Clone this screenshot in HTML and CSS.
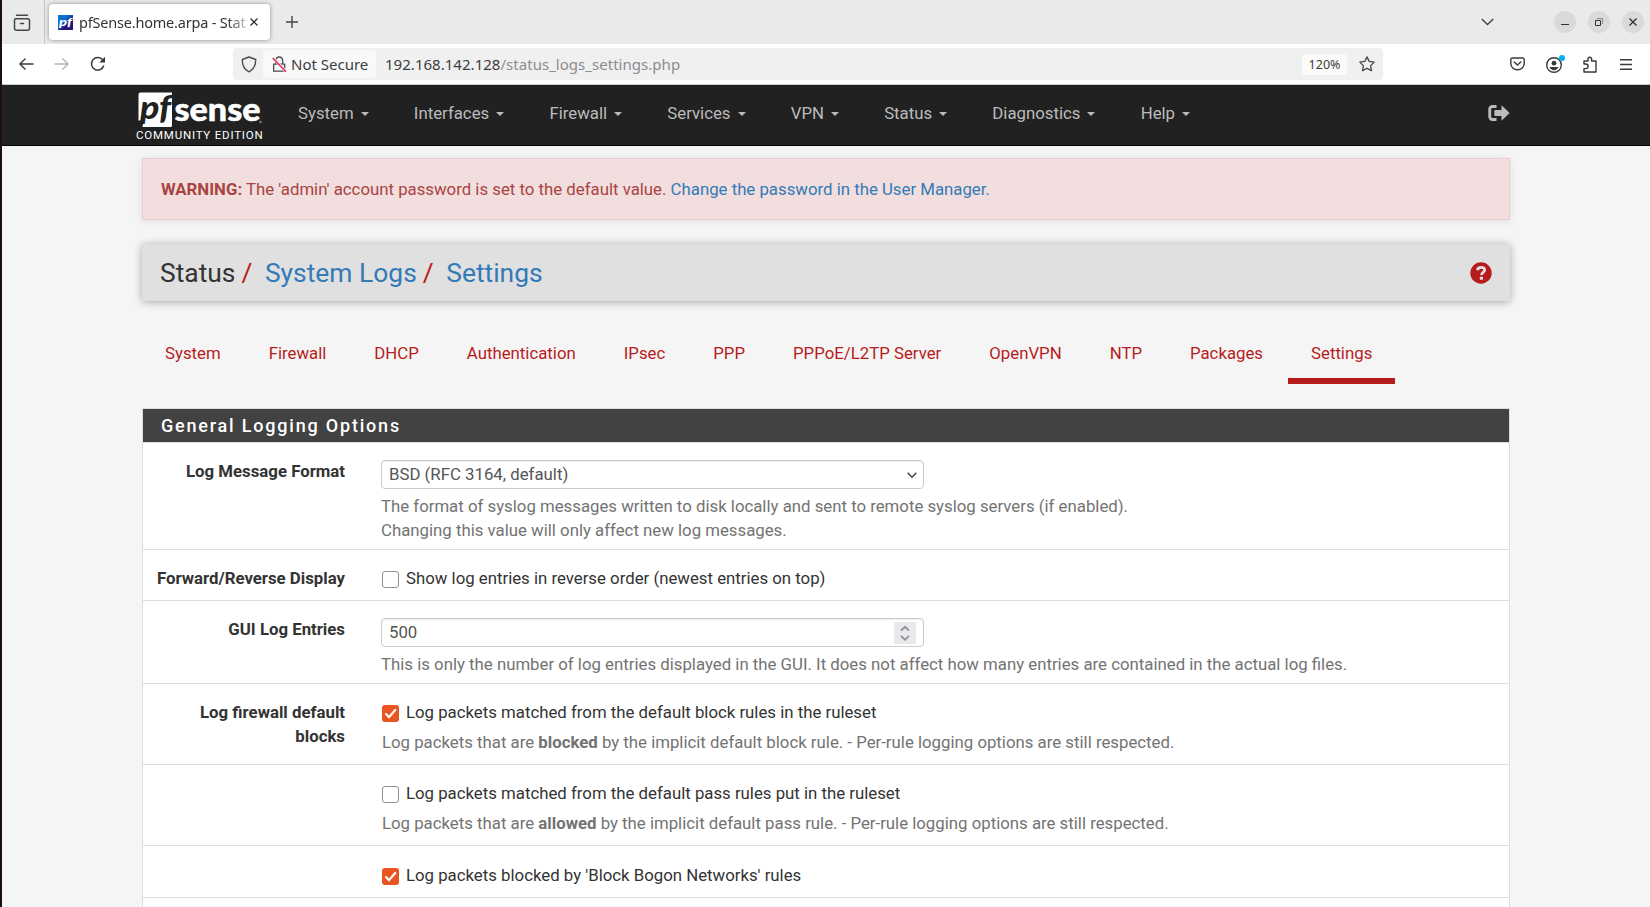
FILE: index.html
```html
<!DOCTYPE html>
<html lang="en">
<head>
<meta charset="utf-8">
<title>pfSense.home.arpa - Status: System Logs: Settings</title>
<link rel="stylesheet" href="styles.css">
</head>
<body>
<div class="window">
  <div class="tabstrip">
    <div class="firefox-view">
      <svg width="18" height="18" viewBox="0 0 18 18" fill="none" stroke="#45454a" stroke-width="1.5" stroke-linecap="round"><path d="M3.5 1.2h11M2.5 4.7h12.200a1.800 1.800 0 0 1 1.800 1.800v7.700a2 2 0 0 1-2 2h-11a2 2 0 0 1-2-2V6.500a1.800 1.800 0 0 1 1-1.800M7.500 9.500h3"/></svg>
    </div>
    <div class="tab">
      <svg class="favicon" width="15" height="15" viewBox="0 0 15 15"><defs><linearGradient id="fav" x1="0" y1="0" x2="1" y2="1"><stop offset=".35" stop-color="#0d6fd0"/><stop offset=".65" stop-color="#22157a"/></linearGradient></defs><rect width="15" height="15" fill="url(#fav)"/><text x="1" y="11" textLength="13" lengthAdjust="spacingAndGlyphs" class="fav-text">pf</text></svg>
      <span class="tab-title">pfSense.home.arpa - Stat</span>
      <svg class="tab-close" width="8" height="8" viewBox="0 0 8 8" stroke="#333" stroke-width="1.300"><path d="M.5.5l7 7M7.500.5l-7 7"/></svg>
    </div>
    <svg class="new-tab" width="12" height="12" viewBox="0 0 12 12" stroke="#444" stroke-width="1.400"><path d="M6 0v12M0 6h12"/></svg>
    <svg class="all-tabs" width="13" height="8" viewBox="0 0 13 8" fill="none" stroke="#444" stroke-width="1.400"><path d="M.8 1l5.700 5.500L12.200 1"/></svg>
    <div class="win-buttons">
      <span class="win-btn"><svg width="22" height="22" stroke="#333" fill="none"><path d="M7 13.500h8"/></svg></span>
      <span class="win-btn"><svg width="22" height="22" stroke="#333" fill="none"><path d="M7.500 9.500h5v5h-5z"/><path stroke="#888" d="M9 7.500h5.500V13"/></svg></span>
      <span class="win-btn"><svg width="22" height="22" stroke="#333" stroke-width="1.400" fill="none"><path d="M7.500 7.500l7 7M14.500 7.500l-7 7"/></svg></span>
    </div>
  </div>
  <div class="toolbar">
    <svg class="back" width="15" height="12" viewBox="0 0 15 12" fill="none" stroke="#3a3a3e" stroke-width="1.400"><path d="M14.500 6H1M6.500.6L1 6l5.500 5.400"/></svg>
    <svg class="forward" width="15" height="12" viewBox="0 0 15 12" fill="none" stroke="#b3b3b5" stroke-width="1.400"><path d="M.5 6H14M8.500.6L14 6l-5.500 5.400"/></svg>
    <svg class="reload" width="16" height="16" viewBox="0 0 16 16" fill="none" stroke="#3a3a3e" stroke-width="1.500"><path d="M13.800 9.500A6.300 6.300 0 1 1 12.800 4"/><path fill="#3a3a3e" stroke="none" d="M15 .8v5.700H9.300z"/></svg>
    <div class="urlbar">
      <svg class="shield" width="16" height="17" viewBox="0 0 16 17" fill="none" stroke="#4a4a4f" stroke-width="1.400"><path d="M8 1l6.700 2.500c.1 5.300-1.200 9.500-6.700 12.300C2.500 13 1.200 8.800 1.300 3.500z" stroke-linejoin="round"/></svg>
      <div class="identity">
        <svg width="15" height="17" viewBox="0 0 15 17" fill="none" stroke="#4a4a4f" stroke-width="1.300"><path d="M1.700 8.200h11v7h-11zM3.700 8V4.500a3.500 3.500 0 0 1 7 0V8"/><path stroke="#f1f1f1" stroke-width="3" d="M1 2l13 13.500"/><path stroke="#e22850" stroke-width="1.500" d="M.8 2l13.200 13.700"/></svg>
        <span class="identity-label">Not Secure</span>
      </div>
      <span class="url"><span class="host">192.168.142.128</span><span class="path">/status_logs_settings.php</span></span>
      <span class="zoom"><span>120%</span></span>
      <svg class="star" width="16" height="16" viewBox="0 0 16 16" fill="none" stroke="#4a4a4f" stroke-width="1.300" stroke-linejoin="round"><path d="M8 .9l2.200 4.500 5 .7-3.600 3.500.9 5L8 12.300l-4.500 2.300.9-5L.8 6.100l5-.7z"/></svg>
    </div>
    <div class="tools">
      <svg width="15" height="14" viewBox="0 0 15 14" fill="none" stroke="#3a3a3e" stroke-width="1.400" stroke-linecap="round" stroke-linejoin="round"><path d="M2.300 1h10.400a1.500 1.500 0 0 1 1.500 1.500V6.500a6.700 6.300 0 0 1-13.400 0V2.500A1.500 1.500 0 0 1 2.300 1zM4.200 5l3.300 3 3.300-3"/></svg>
      <svg class="account" width="20" height="20" viewBox="0 0 20 20" fill="none"><circle cx="9" cy="11" r="7.300" stroke="#3a3a3e" stroke-width="1.400"/><circle cx="9" cy="9.200" r="2.400" fill="#3a3a3e"/><path fill="#3a3a3e" d="M4.500 13h9c-.6 2-2.400 3.200-4.500 3.200S5.100 15 4.500 13z"/><circle cx="17" cy="4" r="3" fill="#00b3f4"/></svg>
      <svg class="puzzle" width="14" height="17" viewBox="0 0 14 17" fill="none" stroke="#3a3a3e" stroke-width="1.400" stroke-linejoin="round"><path d="M1 8V5h4V3a1.800 1.800 0 0 1 3.600 0v2H13v11H1v-3.400h1.800a2.200 2.200 0 0 0 0-4.600z"/></svg>
      <svg class="burger" width="12" height="11" viewBox="0 0 12 11" stroke="#3a3a3e" stroke-width="1.400"><path d="M0 .7h12M0 5.500h12M0 10.300h12"/></svg>
    </div>
  </div>

  <nav class="navbar">
    <div class="brand">
      <svg class="logo" width="128" height="36" viewBox="0 0 128 36"><path fill="#fff" d="M4.500.5h31.500v33a1.500 1.500 0 0 1-1.500 1.500H6.500l1.200-6.500H2.500v-26a2 2 0 0 1 2-2z"/><text class="logo-pf" x="4" y="26.500" textLength="31" lengthAdjust="spacingAndGlyphs">pf</text><text class="logo-sense" x="38.500" y="28.500" textLength="86" lengthAdjust="spacingAndGlyphs">sense</text><circle cx="124.500" cy="30" r="1.300" fill="#777"/></svg>
      <span class="edition">COMMUNITY EDITION</span>
    </div>
    <ul class="menu">
      <li>System<i class="caret"></i></li>
      <li>Interfaces<i class="caret"></i></li>
      <li>Firewall<i class="caret"></i></li>
      <li>Services<i class="caret"></i></li>
      <li>VPN<i class="caret"></i></li>
      <li>Status<i class="caret"></i></li>
      <li>Diagnostics<i class="caret"></i></li>
      <li>Help<i class="caret"></i></li>
    </ul>
    <svg class="logout" width="22" height="16" viewBox="0 0 22 16" fill="#bbb"><path d="M8.500 0v3H4.500A1.300 1.300 0 0 0 3.200 4.300v7.400A1.300 1.300 0 0 0 4.500 13h4v3h-4A4.200 4.200 0 0 1 .3 11.800V4.200A4.200 4.200 0 0 1 4.500 0z"/><path d="M13.500.3L21.700 8l-8.200 7.700V11H7.300a1 1 0 0 1-1-1V6a1 1 0 0 1 1-1h6.200z"/></svg>
  </nav>

  <main class="container">
    <div class="alert"><b>WARNING:</b> The 'admin' account password is set to the default value. <a>Change the password in the User Manager.</a></div>
    <header class="crumbs">
      <ol><li>Status</li><li><a>System Logs</a></li><li><a>Settings</a></li></ol>
      <svg width="22" height="22" viewBox="0 0 22 22"><circle cx="11" cy="11" r="10.700" fill="#b71c1c"/><path d="M7.400 8.300C7.700 6.200 9 5.300 11 5.300c2.200 0 3.700 1.100 3.700 2.800 0 2.300-3.200 2.300-3.200 4.900" fill="none" stroke="#e0e0e0" stroke-width="2.700"/><rect x="9.800" y="14.700" width="3.200" height="3" rx=".4" fill="#e0e0e0"/></svg>
    </header>
    <ul class="tabs">
      <li>System</li><li>Firewall</li><li>DHCP</li><li>Authentication</li><li>IPsec</li><li>PPP</li><li>PPPoE/L2TP Server</li><li>OpenVPN</li><li>NTP</li><li>Packages</li><li class="active">Settings</li>
    </ul>
    <section class="panel">
      <h2>General Logging Options</h2>
      <div class="row">
        <label class="name">Log Message Format</label>
        <div class="field">
          <div class="control"><span class="value">BSD (RFC 3164, default)</span><svg class="chevron" width="10" height="7" viewBox="0 0 10 7" fill="none" stroke="#444" stroke-width="1.500"><path d="M.7.8L5 5.200 9.300.8"/></svg></div>
          <p class="help">The format of syslog messages written to disk locally and sent to remote syslog servers (if enabled).<br>Changing this value will only affect new log messages.</p>
        </div>
      </div>
      <div class="row check-row">
        <label class="name">Forward/Reverse Display</label>
        <div class="field"><div class="check"><i class="box"></i><span>Show log entries in reverse order (newest entries on top)</span></div></div>
      </div>
      <div class="row">
        <label class="name">GUI Log Entries</label>
        <div class="field">
          <div class="control"><span class="value">500</span><span class="spinner"><svg width="22" height="22" fill="none" stroke="#8f8f9d" stroke-width="1.800"><path d="M7 8.700l4-3.900 4 3.900M7 13.900l4 3.900 4-3.900"/></svg></span></div>
          <p class="help">This is only the number of log entries displayed in the GUI. It does not affect how many entries are contained in the actual log files.</p>
        </div>
      </div>
      <div class="row check-help">
        <label class="name">Log firewall default blocks</label>
        <div class="field"><div class="check"><i class="box on"><svg width="17" height="17" fill="none" stroke="#fff" stroke-width="2.200" stroke-linecap="round"><path d="M4 9l3 3.200L13.200 5"/></svg></i><span>Log packets matched from the default block rules in the ruleset</span></div>
        <p class="help">Log packets that are <b>blocked</b> by the implicit default block rule. - Per-rule logging options are still respected.</p></div>
      </div>
      <div class="row check-help">
        <label class="name"></label>
        <div class="field"><div class="check"><i class="box"></i><span>Log packets matched from the default pass rules put in the ruleset</span></div>
        <p class="help">Log packets that are <b>allowed</b> by the implicit default pass rule. - Per-rule logging options are still respected.</p></div>
      </div>
      <div class="row check-row last">
        <label class="name"></label>
        <div class="field"><div class="check"><i class="box on"><svg width="17" height="17" fill="none" stroke="#fff" stroke-width="2.200" stroke-linecap="round"><path d="M4 9l3 3.200L13.200 5"/></svg></i><span>Log packets blocked by 'Block Bogon Networks' rules</span></div></div>
      </div>
      <div class="row"></div>
    </section>
  </main>
</div>
</body>
</html>
```
FILE: styles.css
```css
* { box-sizing: border-box; }
html, body { margin: 0; height: 907px; overflow: hidden; }
body { background: #1d0d18; font-family: Roboto, "Liberation Sans", sans-serif; font-size: 16.8px; line-height: 24px; color: #333; }
svg { display: block; flex: none; }
a { color: #337ab7; }
ul, ol { list-style: none; margin: 0; padding: 0; }
.window { margin-left: 2px; height: 907px; background: #f5f5f5; overflow: hidden; }

.tabstrip { height: 44px; background: #eaeaea; display: flex; align-items: center; font-family: "Noto Sans", sans-serif; }
.firefox-view { width: 43px; height: 44px; border-right: 1px solid #c4c4c4; padding: 14px 0 0 11px; }
.tab { width: 221px; height: 36px; margin-left: 4px; background: #fff; border-radius: 4px; box-shadow: 0 0 4px rgba(0,0,0,.4); display: flex; align-items: center; padding: 0 12px 0 9px; }
.favicon { overflow: visible; }
.fav-text { font: italic 900 12px Lato, sans-serif; fill: #fff; }
.tab-title { margin-left: 6px; width: 169px; font-size: 14.5px; letter-spacing: -.2px; color: #333; white-space: nowrap; -webkit-mask-image: linear-gradient(90deg, #000 148px, transparent 175px); mask-image: linear-gradient(90deg, #000 148px, transparent 175px); }
.tab-close { margin-left: 2px; }
.new-tab { margin-left: 16px; }
.all-tabs { margin-left: auto; }
.win-buttons { display: flex; gap: 12px; margin: 0 6px 0 60px; }
.win-btn { width: 22px; height: 22px; border-radius: 50%; background: #dadada; }

.toolbar { height: 41px; background: #fff; border-bottom: 1px solid #ccc; display: flex; align-items: center; font-family: "Noto Sans", sans-serif; color: #3d3d40; }
.back { margin-left: 17px; }
.forward { margin-left: 20px; }
.reload { margin-left: 21px; }
.urlbar { margin-left: 127px; width: 1150px; height: 32px; background: #f0f0f0; border-radius: 4px; display: flex; align-items: center; font-size: 15px; }
.shield { margin-left: 8px; }
.identity { margin-left: 6px; width: 113px; height: 28px; padding-left: 9px; background: #f9f9f9; border-radius: 4px; display: flex; align-items: center; white-space: nowrap; }
.identity-label { margin-left: 4px; }
.url { margin-left: 9px; white-space: nowrap; letter-spacing: .03px; }
.path { color: #8c8c8e; }
.zoom { margin-left: auto; width: 45px; height: 21px; background: #fbfbfb; border-radius: 4px; font-size: 12.5px; line-height: 21px; text-align: center; }
.star { margin: 0 8px 0 12px; }
.tools { margin-left: auto; margin-right: 18px; display: flex; align-items: center; }
.account { margin-left: 20px; }
.puzzle { margin-left: 18px; }
.burger { margin-left: 23px; }

.navbar { height: 61px; background: #212121; border-bottom: 1px solid #000; display: flex; color: #bbb; }
.brand { margin-left: 134px; width: 128px; padding-top: 7px; }
.logo { overflow: visible; }
.logo-pf { font: italic 900 33px Lato, sans-serif; fill: #212121; }
.logo-sense { font: 900 32px Lato, sans-serif; fill: #fff; stroke: #fff; stroke-width: .5px; }
.edition { display: block; font-size: 11.5px; line-height: 14px; letter-spacing: .79px; color: #fff; white-space: nowrap; }
.menu { display: flex; gap: 45.2px; margin-left: 34px; padding-top: 16px; }
.menu li { display: flex; align-items: center; height: 24px; }
.caret { border: 4px solid transparent; border-top-color: #bbb; border-bottom: 0; margin: 2px 0 0 7px; }
.logout { margin: 20px 140px 0 auto; }

.container { margin: 12px 0 0 140px; width: 1368px; }
.alert { height: 62px; border: 1px solid #ebccd1; background: #f2dede; color: #a94442; padding: 18px; box-shadow: 0 1px 8px rgba(0,0,0,.1); }
.crumbs { margin-top: 24px; height: 57px; background: #e0e0e0; border-radius: 2px; box-shadow: 0 1px 9px rgba(0,0,0,.32); padding: 1px 18px 0; display: flex; align-items: center; justify-content: space-between; }
.crumbs ol { display: flex; font-size: 26.4px; line-height: 30px; }
.crumbs li + li::before { content: "/"; color: #b71c1c; padding: 0 12.6px 0 6px; }
.tabs { display: flex; gap: 2px; margin-top: 33px; height: 50px; color: #b71c1c; }
.tabs li { padding: 7px 23px 0; height: 50px; }
.tabs .active { border-bottom: 6px solid #b71c1c; }
.panel { margin-top: 24px; border: 1px solid #ddd; background: #fff; height: 520px; }
.panel h2 { margin: 0; height: 33px; background: #424242; color: #fff; font-size: 18px; font-weight: 500; letter-spacing: 1.8px; line-height: 33px; padding-left: 18px; }
.row { display: flex; border-top: 1px solid #ddd; padding: 16px 0 7px; }
.name { width: 202px; padding-left: 10px; font-weight: 700; text-align: right; }
.field { margin-left: 36px; }
.control { margin-top: 1px; width: 543px; height: 29px; border: 1px solid #ccc; border-radius: 4px; box-shadow: inset 0 1px 1px rgba(0,0,0,.075); padding: 0 7px; display: flex; align-items: center; justify-content: space-between; color: #555; }
.value { margin-top: -2px; }
.chevron { margin-right: -1px; margin-top: 1px; }
.spinner { width: 22px; height: 22px; background: #e9e9ed; }
.help { margin: 5px 0 0; color: #737373; white-space: nowrap; }
.check { display: flex; height: 24px; padding-left: 1px; }
.box { width: 17px; height: 17px; margin: 5px 7px 0 0; border: 1px solid #8f8f9d; border-radius: 3px; }
.on { background: #e95420; border: 0; }
.check-row { padding-bottom: 10px; }
.check-help .help { margin: 6px 0 0 1px; }
.check-help { padding-bottom: 10px; }
.last { padding-top: 17px; }
```
